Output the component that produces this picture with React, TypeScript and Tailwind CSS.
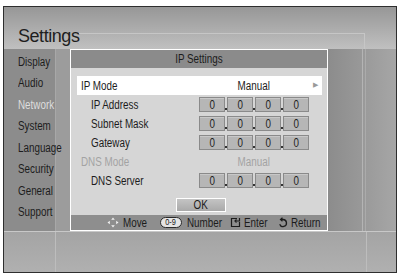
import React from "react";

const menu = ["Display", "Audio", "Network", "System", "Language", "Security", "General", "Support"];

// condensed text: the UI font is a narrow grotesque, so squeeze Liberation Sans
function N({ children, center, className = "" }: { children: React.ReactNode; center?: boolean; className?: string }) {
  return (
    <span
      className={`inline-block whitespace-nowrap scale-x-[0.82] ${center ? "origin-center" : "origin-left"} ${className}`}
    >
      {children}
    </span>
  );
}

function IpBoxes() {
  return (
    <div className="flex h-[15px] w-[110px] gap-[2px]">
      {[0, 1, 2, 3].map((i) => (
        <React.Fragment key={i}>
          {i > 0 && <span className="-mx-[2px] mb-[2px] h-[2px] w-[2px] self-end bg-[#333]" />}
          <div className="flex h-[15px] w-[26px] items-center justify-center border border-[#8a8a8a] bg-[#b6b6b6] text-[12px] leading-none text-[#1f1f1f] shadow-[inset_0_1px_0_#c8c8c8]">
            <N center>0</N>
          </div>
        </React.Fragment>
      ))}
    </div>
  );
}

function Row({
  label,
  indent,
  children,
  muted,
  active,
}: {
  label: string;
  indent?: boolean;
  children: React.ReactNode;
  muted?: boolean;
  active?: boolean;
}) {
  return (
    <div
      className={`flex h-[19px] items-center ${active ? "bg-white" : ""} ${muted ? "text-[#a3a3a3]" : "text-[#1c1c1c]"}`}
    >
      <div className={`w-[122px] ${indent ? "pl-[14px]" : "pl-[4px]"}`}>
        <N>{label}</N>
      </div>
      <div className="flex w-[110px] justify-center">{children}</div>
      <div className="flex flex-1 justify-center text-[7px] text-[#9a9a9a]">{active ? "▶" : ""}</div>
    </div>
  );
}

function MoveIcon() {
  return (
    <svg width="12" height="11" viewBox="0 0 12 11">
      <polygon points="6,0.5 7.8,2.8 4.2,2.8" fill="#f2f2f2" />
      <polygon points="6,10.5 7.8,8.2 4.2,8.2" fill="#f2f2f2" />
      <polygon points="0.5,5.5 2.8,3.7 2.8,7.3" fill="#f2f2f2" />
      <polygon points="11.5,5.5 9.2,3.7 9.2,7.3" fill="#f2f2f2" />
    </svg>
  );
}

function EnterIcon() {
  return (
    <svg width="11" height="11" viewBox="0 0 11 11" fill="none" stroke="#1c1c1c" strokeWidth="1.2">
      <path d="M7 1.5H1.5v8h8V5" />
      <path d="M9.5 1v3H5" />
      <path d="M6.5 2.5L5 4l1.5 1.5" />
    </svg>
  );
}

function ReturnIcon() {
  return (
    <svg width="10" height="11" viewBox="0 0 10 11" fill="none" stroke="#1c1c1c" strokeWidth="1.3">
      <path d="M3 2.5h2a3.5 3.5 0 1 1 -3.3 4.7" />
      <path d="M4.5 0.8L2.6 2.5l1.9 1.7" />
    </svg>
  );
}

export default function App() {
  return (
    <div className="h-[275px] w-[398px] bg-white pl-[3px] pt-[6px]">
      <div className="flex h-[267px] w-[394px] flex-col border border-[#2e2e2e] font-['Liberation_Sans',sans-serif]">
        {/* header */}
        <div className="flex h-[42px] bg-gradient-to-b from-[#979797] to-[#c0c0c0]">
          <div className="pl-[14px] pt-[20px] text-[18px] leading-[18px] tracking-tight text-[#1e1e1e]">Settings</div>
          <div className="mr-[31px] mt-[26px] flex-1 border-r border-t border-[#c6c6c6]" />
        </div>

        {/* middle */}
        <div className="flex h-[182px]">
          <div className="w-[52px] border-r border-[#a8a8a8] bg-[#8c8c8c] pl-[14px] pt-[2px] text-[12px]">
            {menu.map((m) => (
              <div
                key={m}
                className={`flex h-[21.5px] items-center ${m === "Network" ? "text-[#dedede]" : "text-[#1c1c1c]"}`}
              >
                <N>{m}</N>
              </div>
            ))}
          </div>
          <div className="w-[14px] bg-[#9c9c9c]" />
          <div className="flex w-[258px] flex-col border border-white bg-[#d6d6d6] text-[12px]">
            <div className="flex h-[18px] items-center justify-center bg-[#8b8b8b] text-[#1c1c1c]">
              <N center>IP Settings</N>
            </div>
            <div className="flex flex-1 flex-col pl-[6px] pr-[5px] pt-[8px]">
              <Row label="IP Mode" active>
                <N center>Manual</N>
              </Row>
              <Row label="IP Address" indent>
                <IpBoxes />
              </Row>
              <Row label="Subnet Mask" indent>
                <IpBoxes />
              </Row>
              <Row label="Gateway" indent>
                <IpBoxes />
              </Row>
              <Row label="DNS Mode" muted>
                <N center>Manual</N>
              </Row>
              <Row label="DNS Server" indent>
                <IpBoxes />
              </Row>
              <div className="mt-[8px] flex justify-center pl-[2px]">
                <div className="flex h-[14px] w-[50px] items-center justify-center border border-white bg-gradient-to-b from-[#c4c4c4] to-[#a9a9a9] text-[12px] leading-none text-[#1c1c1c]">
                  <N center>OK</N>
                </div>
              </div>
            </div>
            <div className="flex h-[15px] items-center bg-[#8e8e8e] pl-[36px] text-[12px] text-[#1c1c1c]">
              <MoveIcon />
              <N className="ml-[4px] w-[24px]">Move</N>
              <span className="ml-[13px] flex h-[11px] w-[22px] items-center justify-center rounded-full border border-[#2a2a2a] bg-[#e4e4e4] text-[9px] leading-none">
                <N center>0-9</N>
              </span>
              <N className="ml-[5px] w-[35px]">Number</N>
              <span className="ml-[8px] flex">
                <EnterIcon />
              </span>
              <N className="ml-[3px] w-[24px]">Enter</N>
              <span className="ml-[10px] flex">
                <ReturnIcon />
              </span>
              <N className="ml-[3px] w-[29px]">Return</N>
            </div>
          </div>
          <div className="flex flex-1 bg-gradient-to-r from-[#8c8c8c] to-[#a6a6a6]">
            <div className="w-[35px] border-r border-[#b4b4b4]" />
            <div className="w-[3px] border-r border-[#ababab]" />
          </div>
        </div>

        {/* bottom */}
        <div className="flex flex-1 border-t border-[#c8c8c8] bg-gradient-to-b from-[#a4a4a4] to-[#b0b0b0]">
          <div className="w-[52px] border-r border-[#bdbdbd]" />
          <div className="w-[311px] border-r border-[#bdbdbd]" />
        </div>
      </div>
    </div>
  );
}
